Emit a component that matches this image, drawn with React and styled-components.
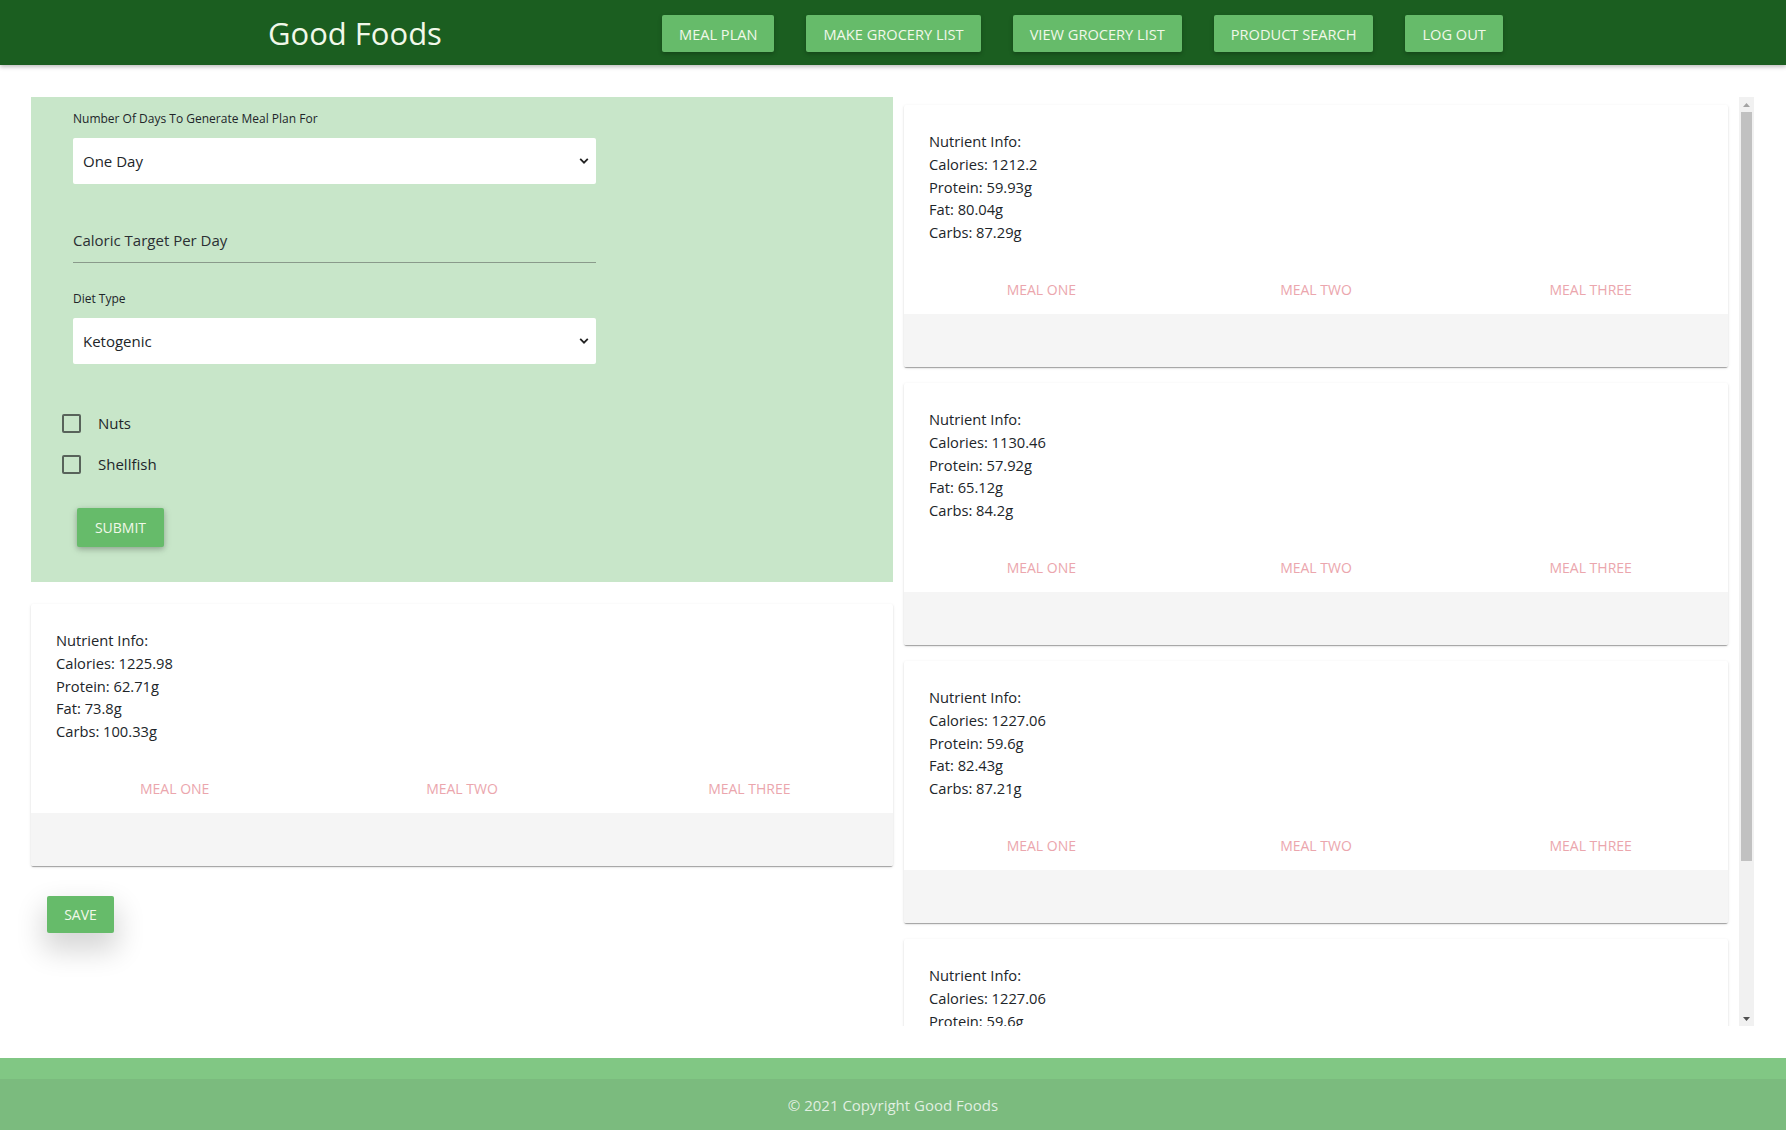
import React, { useLayoutEffect, useRef, useState } from "react";
import styled, { createGlobalStyle } from "styled-components";

const GlobalStyle = createGlobalStyle`
  html, body { margin: 0; padding: 0; background: #ffffff; }
  body { font-family: "Open Sans", "Noto Sans", sans-serif; color: #212529; }
  * { box-sizing: border-box; }
`;

const Page = styled.div`
  display: flex;
  flex-direction: column;
  min-height: 100vh;
`;

const Header = styled.header`
  height: 65px;
  background: #1b5e20;
  display: flex;
  align-items: center;
  padding-left: 268px;
  box-shadow: 0 2px 4px rgba(0, 0, 0, 0.25);
  position: relative;
  z-index: 2;
`;

const Brand = styled.div`
  width: 394px;
  font-size: 31px;
  color: #f1f8e9;
  line-height: 1;
  margin-top: 1px;
`;

const Nav = styled.nav`
  display: flex;
  gap: 32px;
  margin-top: 2px;
`;

const NavButton = styled.button`
  height: 37px;
  padding: 0 17px;
  border: none;
  border-radius: 2px;
  background: #66bb6a;
  color: #f1f8e9;
  font-family: inherit;
  font-size: 14.6px;
  text-transform: uppercase;
  box-shadow: 0 2px 4px rgba(0, 0, 0, 0.25);
  cursor: pointer;
`;

const Main = styled.main`
  flex: 1;
  display: grid;
  grid-template-columns: 862px 857px;
  column-gap: 4px;
  align-items: start;
  padding: 32px 0 32px 31px;
`;

const LeftCol = styled.div`
  display: flex;
  flex-direction: column;
  align-items: flex-start;
`;

const FormPanel = styled.form`
  width: 862px;
  height: 485px;
  background: #c8e6c9;
  padding: 13px 0 0 42px;
  display: flex;
  flex-direction: column;
`;

const SmallLabel = styled.label`
  font-size: 12px;
  line-height: 18px;
  color: #212529;
  margin-top: ${(p) => p.$top || 0}px;
`;

const SelectWrap = styled.div`
  position: relative;
  width: 523px;
  height: 46px;
  margin-top: 10px;
`;

const Select = styled.select`
  appearance: none;
  -webkit-appearance: none;
  width: 100%;
  height: 100%;
  border: none;
  border-radius: 2px;
  background: #ffffff;
  padding: 0 30px 0 10px;
  font-family: inherit;
  font-size: 15px;
  color: #212529;
  outline: none;
`;

const Chevron = styled.svg`
  position: absolute;
  right: 7px;
  top: 50%;
  transform: translateY(-50%);
  pointer-events: none;
`;

const TextInput = styled.input`
  width: 523px;
  height: 37px;
  margin-top: 42px;
  padding: 0 0 8px 0;
  border: none;
  border-bottom: 1px solid #8a9a8b;
  background: transparent;
  font-family: inherit;
  font-size: 15px;
  color: #212529;
  outline: none;
  &::placeholder { color: #2b2f33; opacity: 1; }
`;

const CheckList = styled.div`
  display: flex;
  flex-direction: column;
  gap: 17px;
  margin: 47px 0 0 -11px;
`;

const CheckRow = styled.label`
  display: flex;
  align-items: center;
  gap: 17px;
  height: 24px;
  font-size: 15px;
  color: #212529;
`;

const Box = styled.span`
  width: 19px;
  height: 19px;
  border: 2px solid #58635a;
  border-radius: 2px;
`;

const GreenButton = styled.button`
  border: none;
  border-radius: 2px;
  background: #66bb6a;
  color: #f1f8e9;
  font-family: inherit;
  font-size: 14px;
  text-transform: uppercase;
  cursor: pointer;
`;

const SubmitButton = styled(GreenButton)`
  width: 87px;
  height: 39px;
  margin: 32px 0 0 4px;
  box-shadow: 0 2px 5px rgba(0, 0, 0, 0.2), 0 2px 10px rgba(0, 0, 0, 0.12);
`;

const SaveButton = styled(GreenButton)`
  width: 67px;
  height: 37px;
  margin: 30px 0 0 16px;
  box-shadow: 0 14px 28px 4px rgba(0, 0, 0, 0.16);
`;

const Card = styled.div`
  width: ${(p) => p.$width}px;
  background: #ffffff;
  border-radius: 2px;
  box-shadow: 0 2px 1px -1px rgba(0, 0, 0, 0.2), 0 1px 1px 0 rgba(0, 0, 0, 0.14),
    0 1px 3px 0 rgba(0, 0, 0, 0.12);
  margin-top: ${(p) => p.$top || 0}px;
  overflow: hidden;
  flex-shrink: 0;
`;

const CardBody = styled.div`
  padding: 25px 25px 0;
  font-size: 14.7px;
  line-height: 22.8px;
  color: #212529;
`;

const Tabs = styled.div`
  display: grid;
  grid-template-columns: repeat(3, 1fr);
  height: 48px;
  margin-top: 22px;
`;

const Tab = styled.div`
  display: flex;
  align-items: center;
  justify-content: center;
  font-size: 14px;
  text-transform: uppercase;
  color: #eba6ad;
`;

const TabPanel = styled.div`
  height: 53px;
  background: #f5f5f5;
`;

const ScrollFrame = styled.div`
  position: relative;
  height: 929px;
`;

const ScrollArea = styled.div`
  height: 100%;
  overflow-y: auto;
  scrollbar-width: none;
  padding: 8px 26px 11px 7px;
  display: flex;
  flex-direction: column;
  gap: 16px;
  &::-webkit-scrollbar { display: none; }
`;

const ScrollTrack = styled.div`
  position: absolute;
  top: 0;
  right: 0;
  width: 15px;
  height: 100%;
  background: #f1f1f1;
  display: flex;
  flex-direction: column;
`;

const ScrollArrow = styled.div`
  height: 15px;
  display: flex;
  align-items: center;
  justify-content: center;
  flex-shrink: 0;
`;

const ThumbLane = styled.div`
  flex: 1;
  position: relative;
`;

const Thumb = styled.div`
  position: absolute;
  left: 2px;
  right: 2px;
  top: 0;
  background: #c1c1c1;
`;

const Footer = styled.footer`
  background: #81c784;
  padding-top: 21px;
`;

const Copyright = styled.div`
  height: 51px;
  background: #7bbb7e;
  display: flex;
  align-items: center;
  justify-content: center;
  font-size: 15px;
  color: rgba(255, 255, 255, 0.78);
`;

const ChevronIcon = () => (
  <Chevron width="10" height="7" viewBox="0 0 10 7">
    <path d="M1.2 1.4 L5 5.2 L8.8 1.4" fill="none" stroke="#222" strokeWidth="1.8" />
  </Chevron>
);

const NutrientCard = ({ data, width, top }) => (
  <Card $width={width} $top={top}>
    <CardBody>
      <div>Nutrient Info:</div>
      <div>Calories: {data.cal}</div>
      <div>Protein: {data.protein}g</div>
      <div>Fat: {data.fat}g</div>
      <div>Carbs: {data.carbs}g</div>
    </CardBody>
    <Tabs>
      <Tab>Meal One</Tab>
      <Tab>Meal Two</Tab>
      <Tab>Meal Three</Tab>
    </Tabs>
    <TabPanel />
  </Card>
);

const plans = [
  { cal: "1212.2", protein: "59.93", fat: "80.04", carbs: "87.29" },
  { cal: "1130.46", protein: "57.92", fat: "65.12", carbs: "84.2" },
  { cal: "1227.06", protein: "59.6", fat: "82.43", carbs: "87.21" },
  { cal: "1227.06", protein: "59.6", fat: "82.43", carbs: "87.21" },
];

const PlanList = () => {
  const areaRef = useRef(null);
  const [thumb, setThumb] = useState({ top: 0, height: 749 });

  const update = () => {
    const el = areaRef.current;
    if (!el) return;
    const lane = el.clientHeight - 30;
    const ratio = el.clientHeight / el.scrollHeight;
    const h = Math.max(20, lane * ratio);
    const maxScroll = el.scrollHeight - el.clientHeight;
    const top = maxScroll > 0 ? (el.scrollTop / maxScroll) * (lane - h) : 0;
    setThumb({ top, height: h });
  };

  useLayoutEffect(() => {
    update();
  }, []);

  return (
    <ScrollFrame>
      <ScrollArea ref={areaRef} onScroll={update}>
        {plans.map((p, i) => (
          <NutrientCard key={i} width={824} data={p} />
        ))}
      </ScrollArea>
      <ScrollTrack>
        <ScrollArrow>
          <svg width="7" height="4" viewBox="0 0 7 4">
            <polygon points="0,4 3.5,0 7,4" fill="#a3a3a3" />
          </svg>
        </ScrollArrow>
        <ThumbLane>
          <Thumb style={{ top: thumb.top, height: thumb.height }} />
        </ThumbLane>
        <ScrollArrow>
          <svg width="7" height="4" viewBox="0 0 7 4">
            <polygon points="0,0 7,0 3.5,4" fill="#505050" />
          </svg>
        </ScrollArrow>
      </ScrollTrack>
    </ScrollFrame>
  );
};

export default function App() {
  return (
    <>
      <GlobalStyle />
      <Page>
        <Header>
          <Brand>Good Foods</Brand>
          <Nav>
            <NavButton>Meal Plan</NavButton>
            <NavButton>Make Grocery List</NavButton>
            <NavButton>View Grocery List</NavButton>
            <NavButton>Product Search</NavButton>
            <NavButton>Log Out</NavButton>
          </Nav>
        </Header>
        <Main>
          <LeftCol>
            <FormPanel onSubmit={(e) => e.preventDefault()}>
              <SmallLabel>Number Of Days To Generate Meal Plan For</SmallLabel>
              <SelectWrap>
                <Select defaultValue="1">
                  <option value="1">One Day</option>
                  <option value="2">Two Days</option>
                  <option value="3">Three Days</option>
                </Select>
                <ChevronIcon />
              </SelectWrap>
              <TextInput placeholder="Caloric Target Per Day" />
              <SmallLabel $top={27}>Diet Type</SmallLabel>
              <SelectWrap>
                <Select defaultValue="keto">
                  <option value="keto">Ketogenic</option>
                  <option value="veg">Vegetarian</option>
                  <option value="paleo">Paleo</option>
                </Select>
                <ChevronIcon />
              </SelectWrap>
              <CheckList>
                <CheckRow>
                  <Box />
                  Nuts
                </CheckRow>
                <CheckRow>
                  <Box />
                  Shellfish
                </CheckRow>
              </CheckList>
              <SubmitButton type="submit">Submit</SubmitButton>
            </FormPanel>
            <NutrientCard
              width={862}
              top={22}
              data={{ cal: "1225.98", protein: "62.71", fat: "73.8", carbs: "100.33" }}
            />
            <SaveButton>Save</SaveButton>
          </LeftCol>
          <PlanList />
        </Main>
        <Footer>
          <Copyright>© 2021 Copyright Good Foods</Copyright>
        </Footer>
      </Page>
    </>
  );
}
